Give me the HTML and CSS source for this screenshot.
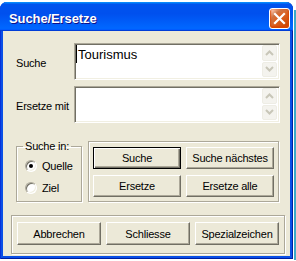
FILE: index.html
```html
<!DOCTYPE html>
<html>
<head>
<meta charset="utf-8">
<link rel="stylesheet" href="styles.css">
</head>
<body>
<div class="screen">
  <div class="window">
    <div class="titlebar">
      <span class="title">Suche/Ersetze</span>
      <div class="close">
        <svg width="13" height="13" viewBox="0 0 13 13"><path d="M2 2 L11 11 M11 2 L2 11" stroke="#fff" stroke-width="2.2" stroke-linecap="square"/></svg>
      </div>
    </div>
    <div class="client">
      <div class="fields">
        <div class="row">
          <span class="label">Suche</span>
          <div class="textbox">
            <div class="text"><span class="caret"></span>Tourismus</div>
            <div class="spin">
              <div class="arrow"><svg width="9" height="6" viewBox="0 0 9 6"><path d="M1 5 L4.5 1.5 L8 5" fill="none" stroke="#c8c6b8" stroke-width="2"/></svg></div>
              <div class="arrow"><svg width="9" height="6" viewBox="0 0 9 6"><path d="M1 1 L4.5 4.5 L8 1" fill="none" stroke="#c8c6b8" stroke-width="2"/></svg></div>
            </div>
          </div>
        </div>
        <div class="row">
          <span class="label">Ersetze mit</span>
          <div class="textbox">
            <div class="text"></div>
            <div class="spin">
              <div class="arrow"><svg width="9" height="6" viewBox="0 0 9 6"><path d="M1 5 L4.5 1.5 L8 5" fill="none" stroke="#c8c6b8" stroke-width="2"/></svg></div>
              <div class="arrow"><svg width="9" height="6" viewBox="0 0 9 6"><path d="M1 1 L4.5 4.5 L8 1" fill="none" stroke="#c8c6b8" stroke-width="2"/></svg></div>
            </div>
          </div>
        </div>
      </div>
      <div class="middle">
        <fieldset class="group">
          <legend>Suche in:</legend>
          <div class="radio"><span class="circle checked"></span>Quelle</div>
          <div class="radio"><span class="circle"></span>Ziel</div>
        </fieldset>
        <div class="btnframe">
          <div class="btn default">Suche</div>
          <div class="btn">Suche nächstes</div>
          <div class="btn">Ersetze</div>
          <div class="btn">Ersetze alle</div>
        </div>
      </div>
      <div class="bottom">
        <div class="btn tall">Abbrechen</div>
        <div class="btn tall">Schliesse</div>
        <div class="btn tall">Spezialzeichen</div>
      </div>
    </div>
  </div>
  <div class="edge"></div>
</div>
</body>
</html>
```

FILE: styles.css
```css
* { box-sizing: border-box; }
html, body {
  margin: 0;
  padding: 0;
  background: #fff;
}
body {
  font-family: "Liberation Sans", Arial, sans-serif;
  font-size: 11px;
  letter-spacing: -0.2px;
  color: #000;
  width: 296px;
  height: 261px;
  overflow: hidden;
}
.screen {
  display: flex;
  align-items: flex-start;
  padding-top: 2px;
  height: 261px;
}
.edge {
  width: 2px;
  height: 250px;
  margin-left: 1px;
  margin-top: 8px;
  background: #3aa9c8;
}
.window {
  width: 293px;
  height: 257px;
  background: #0a4fe6;
  border-radius: 7px 7px 0 0;
  display: flex;
  flex-direction: column;
  box-shadow: inset 1px 0 #0831d9, inset -1px 0 #001ea0, inset 0 -1px #001ea0;
}
.titlebar {
  height: 29px;
  flex: none;
  display: flex;
  align-items: center;
  justify-content: space-between;
  padding: 4px 3px 0 9px;
  border-radius: 7px 7px 0 0;
  background: linear-gradient(180deg, #0997ff, #0053ee 8%, #0050ee 40%, #0066ff 88%, #0066ff 93%, #005bff 95%, #003dd7 96%, #003dd7);
}
.title {
  color: #fff;
  font-weight: bold;
  font-size: 13px;
  letter-spacing: -0.1px;
  text-shadow: 1px 1px #0f1089;
  margin-top: -1px;
}
.close {
  width: 21px;
  height: 21px;
  border: 1px solid #fff;
  border-radius: 3px;
  background: radial-gradient(circle at 90% 90%, #cc4600 0%, #dc6527 55%, #cd7546 70%, #ffccb2 90%, #fff 100%);
  box-shadow: inset 0 -1px 2px 1px #da4600;
  display: flex;
  align-items: center;
  justify-content: center;
}
.client {
  margin: 0 3px 3px 3px;
  flex: 1;
  background: #ece9d8;
  padding-top: 12px;
}
.fields {
  display: flex;
  flex-direction: column;
  gap: 6px;
  padding-left: 13px;
}
.row {
  display: flex;
  align-items: center;
}
.label {
  width: 58px;
  padding-top: 2px;
}
.textbox {
  width: 206px;
  height: 37px;
  background: #fff;
  border: 1px solid;
  border-color: #aca899 #fff #fff #aca899;
  box-shadow: inset 1px 1px #716f64, inset -1px -1px #f1efe2;
  display: flex;
  padding: 1px 2px 2px 1px;
}
.text {
  flex: 1;
  font-size: 13px;
  letter-spacing: 0;
  line-height: 15px;
  padding-top: 2px;
  padding-left: 2px;
  position: relative;
}
.caret {
  position: absolute;
  left: 0;
  top: 0;
  width: 1px;
  height: 18px;
  background: #000;
}
.spin {
  width: 15px;
  display: flex;
  flex-direction: column;
  gap: 1px;
}
.arrow {
  height: 16px;
  border: 1px solid #eeede5;
  border-radius: 2px;
  background: #f4f3ee;
  display: flex;
  align-items: center;
  justify-content: center;
}
.middle {
  display: flex;
  align-items: flex-start;
  gap: 6px;
  margin-top: 17px;
  padding-left: 13px;
}
.group {
  margin: 0;
  width: 66px;
  height: 62px;
  padding: 0 0 0 8px;
  border: 1px solid #aca899;
  box-shadow: inset 1px 1px #fff, 1px 1px #fff;
  border-radius: 0;
}
.group legend {
  padding: 0 2px;
  margin-left: -2px;
  line-height: 13px;
}
.radio {
  height: 22px;
  display: flex;
  align-items: center;
  gap: 5px;
}
.radio:first-of-type { margin-top: 2px; }
.circle {
  width: 12px;
  height: 12px;
  border-radius: 50%;
  background: #fff;
  border: 1px solid;
  border-color: #aca899 #fff #fff #aca899;
  box-shadow: inset 1px 1px #716f64, inset -1px -1px #f1efe2;
  display: flex;
  align-items: center;
  justify-content: center;
}
.circle.checked::after {
  content: "";
  width: 4px;
  height: 4px;
  border-radius: 50%;
  background: #000;
}
.btnframe {
  margin-top: 1px;
  width: 191px;
  height: 61px;
  border: 1px solid #aca899;
  box-shadow: inset 1px 1px #fff, 1px 1px #fff;
  display: grid;
  grid-template-columns: 88px 88px;
  grid-auto-rows: 22px;
  column-gap: 5px;
  row-gap: 6px;
  padding: 5px 0 0 4px;
}
.btn {
  background: #ece9d8;
  border: 1px solid;
  border-color: #fff #716f64 #716f64 #fff;
  box-shadow: inset -1px -1px #aca899;
  display: flex;
  align-items: center;
  justify-content: center;
  white-space: nowrap;
}
.btn.default {
  border-color: #000;
  box-shadow: inset 1px 1px #fff, inset -1px -1px #716f64, inset -2px -2px #aca899;
}
.bottom {
  margin: 13px 0 0 8px;
  width: 274px;
  height: 39px;
  border: 1px solid #aca899;
  box-shadow: inset 1px 1px #fff, 1px 1px #fff;
  display: flex;
  gap: 5px;
  padding: 6px 0 0 5px;
}
.btn.tall {
  width: 84px;
  height: 23px;
}
```
